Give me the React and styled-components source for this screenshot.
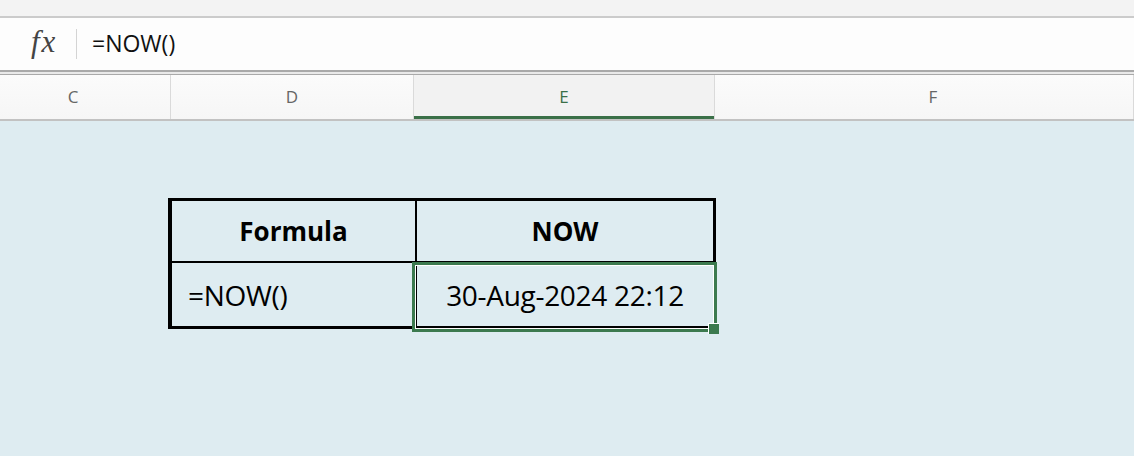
import React from 'react';
import styled, { createGlobalStyle } from 'styled-components';

const Global = createGlobalStyle`
  html, body { margin: 0; padding: 0; }
  body {
    width: 1134px;
    height: 456px;
    overflow: hidden;
    background: #deecf1;
    font-family: "Open Sans", "Liberation Sans", sans-serif;
  }
`;

const Screen = styled.div`
  width: 1134px;
  height: 456px;
  display: flex;
  flex-direction: column;
  background: #deecf1;
`;

const TopStrip = styled.div`
  height: 16px;
  background: #f3f3f3;
  border-bottom: 2px solid #cbcbcb;
`;

const FormulaBar = styled.div`
  height: 52px;
  background: #fdfdfd;
  display: flex;
  align-items: center;
`;

const Fx = styled.div`
  width: 76px;
  padding-left: 31px;
  box-sizing: border-box;
  font-family: "Liberation Serif", serif;
  font-style: italic;
  font-size: 31px;
  color: #444;
  letter-spacing: 2px;
  margin-top: -4px;
`;

const Divider = styled.div`
  width: 1px;
  height: 30px;
  background: #d4d4d4;
  margin-right: 15px;
`;

const FormulaText = styled.div`
  font-size: 23px;
  color: #111;
  margin-top: -2px;
`;

const HeaderRule = styled.div`
  height: 5px;
  box-sizing: border-box;
  border-top: 2px solid #a9a9a9;
  border-bottom: 1px solid #a9a9a9;
  background: #e9e9e9;
`;

const ColumnHeaders = styled.div`
  height: 44px;
  display: grid;
  grid-template-columns: 171px 243px 301px 1fr;
  background: linear-gradient(#fbfbfb, #f6f6f6);
  border-bottom: 2px solid #c2c2c2;
`;

const ColHead = styled.div`
  display: flex;
  align-items: center;
  justify-content: center;
  font-size: 17px;
  color: ${p => (p.$active ? '#3a7048' : '#666')};
  background: ${p => (p.$active ? '#f2f2f2' : 'transparent')};
  border-right: 1px solid #dadada;
  box-shadow: ${p => (p.$active ? 'inset 0 -3px 0 #3a7048' : 'none')};
  padding: 0 ${p => p.$padR || 0}px 2px ${p => p.$padL || 0}px;
  box-sizing: border-box;
`;

const Sheet = styled.div`
  flex: 1;
  padding: 77px 0 0 168px;
`;

const Table = styled.div`
  position: relative;
  width: 548px;
  display: grid;
  grid-template-columns: 245px 1fr;
  grid-template-rows: 62px 63px;
  border: 3px solid #000;
  border-left-width: 4px;
  box-sizing: border-box;
`;

const Cell = styled.div`
  display: flex;
  align-items: center;
  justify-content: ${p => (p.$left ? 'flex-start' : 'center')};
  padding-left: ${p => (p.$left ? '16px' : '0')};
  font-size: ${p => (p.$bold ? '26px' : '28px')};
  font-weight: ${p => (p.$bold ? 700 : 400)};
  letter-spacing: ${p => (p.$bold ? '0' : '-0.3px')};
  color: #000;
  border-right: ${p => (p.$first ? '2px solid #000' : 'none')};
  border-bottom: ${p => (p.$top ? '2px solid #000' : 'none')};
`;

const Selection = styled.div`
  position: absolute;
  left: 240px;
  top: 61px;
  width: 305px;
  height: 70px;
  box-sizing: border-box;
  border: 3px solid #3c7a4f;
  box-shadow: inset 0 0 0 1px #fff;
  pointer-events: none;
`;

const Handle = styled.div`
  position: absolute;
  right: -5px;
  bottom: -5px;
  width: 10px;
  height: 10px;
  background: #3c7a4f;
  border-top: 1px solid #fff;
  border-left: 1px solid #fff;
`;

export default function App() {
  return (
    <Screen>
      <Global />
      <TopStrip />
      <FormulaBar>
        <Fx>fx</Fx>
        <Divider />
        <FormulaText>=NOW()</FormulaText>
      </FormulaBar>
      <HeaderRule />
      <ColumnHeaders>
        <ColHead $padR={24}>C</ColHead>
        <ColHead>D</ColHead>
        <ColHead $active>E</ColHead>
        <ColHead $padL={18}>F</ColHead>
      </ColumnHeaders>
      <Sheet>
        <Table>
          <Cell $bold $first $top>Formula</Cell>
          <Cell $bold $top>NOW</Cell>
          <Cell $left $first>=NOW()</Cell>
          <Cell>30-Aug-2024 22:12</Cell>
          <Selection>
            <Handle />
          </Selection>
        </Table>
      </Sheet>
    </Screen>
  );
}
